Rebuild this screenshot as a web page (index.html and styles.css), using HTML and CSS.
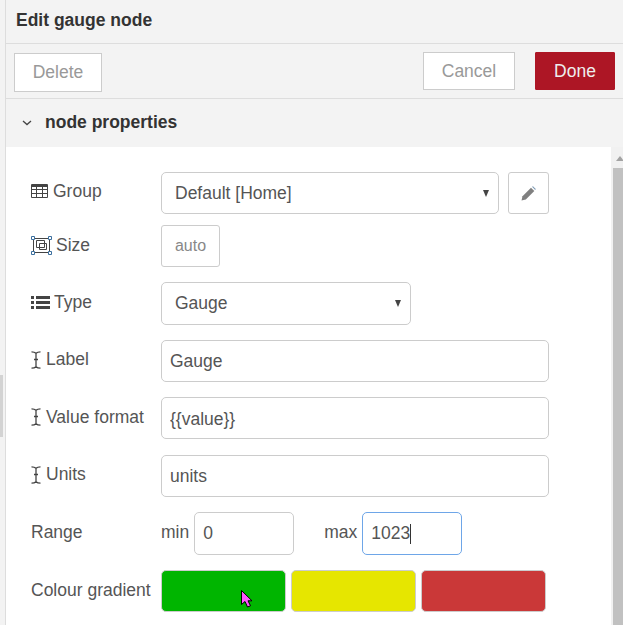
FILE: index.html
```html
<!DOCTYPE html>
<html lang="en">
<head>
  <meta charset="UTF-8" />
  <title>Edit gauge node</title>
  <link rel="stylesheet" href="styles.css">
</head>
<body>

  <div class="sash"></div>

  <main class="tray">
    <header class="tray-title">Edit gauge node</header>

    <div class="toolbar">
      <button class="btn btn-delete">Delete</button>
      <div class="toolbar-right">
        <button class="btn btn-cancel">Cancel</button>
        <button class="btn btn-done">Done</button>
      </div>
    </div>

    <div class="section-head">
      <svg class="chevron" viewBox="0 0 10 6" width="10" height="6"><path d="M1 1l4 3.600L9 1" fill="none" stroke="#444" stroke-width="1.300"/></svg>
      <span>node properties</span>
    </div>

    <div class="body">
      <form class="props" autocomplete="off">

        <div class="row row-group">
          <label class="lbl lbl-group">
            <svg class="ico" viewBox="0 0 17 14" width="17" height="14"><path d="M.5.5h16v13H.5zM.5 1.500h16M.5 2.500h16M.5 5.500h16M.5 9.500h16M5.500 3v10.500M11.500 3v10.500" fill="none" stroke="#444" stroke-width="1"/></svg>
            Group
          </label>
          <div class="select select-group"><span>Default [Home]</span><i class="caret"></i></div>
          <button type="button" class="edit-btn">
            <svg viewBox="0 0 15 15" width="15" height="15"><path d="M.5 14.500l1-4.300L10 1.700l3.300 3.300-8.500 8.500z" fill="#808080"/><path d="M11 .8l1-.6 2.800 2.800-.6 1z" fill="#7f9cb5"/></svg>
          </button>
        </div>

        <div class="row row-size">
          <label class="lbl lbl-size">
            <svg class="ico" viewBox="0 0 21 19" width="21" height="19"><path d="M2.500 2.500h16v14h-16z" fill="none" stroke="#444"/><path d="M5.500 4.500h8v7h-8zM8.500 7.500h7v6h-7z" fill="none" stroke="#444"/><path d="M.5.500h3v3h-3zM17.500.5h3v3h-3zM.5 15.500h3v3h-3zM17.500 15.500h3v3h-3z" fill="#fff" stroke="#3b6f9e"/></svg>
            Size
          </label>
          <button type="button" class="size-btn">auto</button>
        </div>

        <div class="row row-type">
          <label class="lbl lbl-type">
            <svg class="ico" viewBox="0 0 19 13" width="19" height="13"><path d="M0 0h3v3H0zM5 0h14v3H5zM0 5h3v3H0zM5 5h14v3H5zM0 10h3v3H0zM5 10h14v3H5z" fill="#444"/></svg>
            Type
          </label>
          <div class="select select-type"><span>Gauge</span><i class="caret"></i></div>
        </div>

        <div class="row row-text">
          <label class="lbl">
            <svg class="ico" viewBox="0 0 10 18" width="10" height="18"><path d="M.5 .8c2.200 0 3.500.5 4.500 1.500 1-1 2.300-1.500 4.500-1.500M5 2v14M3 8.500h4M.5 17.200c2.200 0 3.500-.5 4.500-1.500 1 1 2.300 1.500 4.500 1.500" fill="none" stroke="#444" stroke-width="1.300"/></svg>
            Label
          </label>
          <input class="field" type="text" value="Gauge" />
        </div>

        <div class="row row-text">
          <label class="lbl">
            <svg class="ico" viewBox="0 0 10 18" width="10" height="18"><path d="M.5 .8c2.200 0 3.500.5 4.500 1.500 1-1 2.300-1.500 4.500-1.500M5 2v14M3 8.500h4M.5 17.200c2.200 0 3.500-.5 4.500-1.500 1 1 2.300 1.500 4.500 1.500" fill="none" stroke="#444" stroke-width="1.300"/></svg>
            Value format
          </label>
          <input class="field" type="text" value="{{value}}" />
        </div>

        <div class="row row-text">
          <label class="lbl">
            <svg class="ico" viewBox="0 0 10 18" width="10" height="18"><path d="M.5 .8c2.200 0 3.500.5 4.500 1.500 1-1 2.300-1.500 4.500-1.500M5 2v14M3 8.500h4M.5 17.200c2.200 0 3.500-.5 4.500-1.500 1 1 2.300 1.500 4.500 1.500" fill="none" stroke="#444" stroke-width="1.300"/></svg>
            Units
          </label>
          <input class="field" type="text" value="units" />
        </div>

        <div class="row row-range">
          <label class="lbl">Range</label>
          <span class="unit">min</span>
          <input class="field field-num" type="text" value="0" />
          <span class="unit unit-max">max</span>
          <div class="field field-num field-focus">1023<i class="text-caret"></i></div>
        </div>

        <div class="row">
          <label class="lbl">Colour gradient</label>
          <div class="swatches">
            <div class="swatch swatch-green">
              <svg class="pointer" viewBox="0 0 12 18" width="12" height="18"><path d="M.5 .5v14l3.500-3 2.500 5.500 3-1.200-2.500-5H11z" fill="#ff55ff" stroke="#000" stroke-width="1"/></svg>
            </div>
            <div class="swatch swatch-yellow"></div>
            <div class="swatch swatch-red"></div>
          </div>
        </div>

      </form>

      <div class="scrollbar">
        <div class="scroll-up"></div>
        <div class="scroll-thumb"></div>
      </div>
    </div>
  </main>

</body>
</html>
```

FILE: styles.css
```css
/* Reset and base */
* {
  box-sizing: border-box;
}
html, body {
  height: 100%;
}
body {
  margin: 0;
  padding-left: 5px;
  background: #f3f3f3;
  color: #555;
  font-family: "Liberation Sans", Arial, sans-serif;
  font-size: 17.500px;
  overflow: hidden;
}
.sash {
  position: absolute;
  left: 0;
  top: 375px;
  width: 3px;
  height: 62px;
  background: #d3d3d3;
}
.tray {
  display: flex;
  flex-direction: column;
  height: 100%;
  border-left: 1px solid #ddd;
}

/* Header */
.tray-title {
  height: 44px;
  padding: 10px 0 0 10px;
  border-bottom: 1px solid #ddd;
  color: #333;
  font-weight: 700;
}
.toolbar {
  display: flex;
  justify-content: space-between;
  align-items: flex-start;
  height: 55px;
  padding: 8px 8px 0 8px;
  border-bottom: 1px solid #ddd;
}
.toolbar-right {
  display: flex;
  gap: 20px;
}
.btn {
  width: 88px;
  height: 38px;
  padding: 0;
  border: 1px solid #ccc;
  background: #fff;
  color: #999;
  font: inherit;
}
.btn-delete {
  height: 39px;
  margin-top: 1px;
}
.btn-cancel {
  width: 92px;
}
.btn-done {
  width: 80px;
  border-color: #ad1625;
  border-radius: 1px;
  background: #ad1625;
  color: #eee;
}
.section-head {
  display: flex;
  align-items: center;
  height: 48px;
  padding: 0 0 1px 16px;
  color: #333;
  font-weight: 700;
}
.chevron {
  margin-right: 13px;
}

/* Form */
.body {
  display: flex;
  flex: 1;
  min-height: 0;
  overflow: hidden;
  background: #fff;
}
.props {
  flex: none;
  width: 605px;
  padding: 25px 0 0 25px;
}
.row {
  display: flex;
  align-items: flex-start;
}
.row-group { height: 53px; }
.row-size { height: 57px; }
.row-type { height: 57.900px; }
.row-text { height: 57.500px; }
.row-range { height: 58px; }
.lbl {
  display: flex;
  align-items: center;
  gap: 5px;
  width: 130px;
  height: 40px;
  flex: none;
}
.lbl-group { height: 38px; }
.lbl-size { gap: 4px; }
.lbl-type { gap: 4px; }
.ico {
  flex: none;
}
.select {
  display: flex;
  align-items: center;
  justify-content: space-between;
  height: 42px;
  padding: 0 9px 0 13px;
  border: 1px solid #ccc;
  border-radius: 5px;
  background: #fff;
}
.select-group { width: 338px; }
.select-type { width: 250px; height: 43px; }
.caret {
  width: 0;
  height: 0;
  border-left: 3.500px solid transparent;
  border-right: 3.500px solid transparent;
  border-top: 7px solid #444;
}
.edit-btn {
  display: flex;
  align-items: center;
  justify-content: center;
  width: 41px;
  height: 42px;
  margin-left: 9px;
  padding: 0;
  border: 1px solid #ccc;
  border-radius: 3px;
  background: #fff;
}
.size-btn {
  width: 59px;
  height: 42px;
  padding: 0;
  border: 1px solid #ccc;
  border-radius: 3px;
  background: #fff;
  color: #888;
  font: inherit;
  font-size: 16px;
}
.field {
  width: 388px;
  height: 42px;
  padding: 2px 8px 0;
  border: 1px solid #ccc;
  border-radius: 5px;
  background: #fff;
  color: #555;
  font: inherit;
  outline: none;
}
.field-num {
  width: 100px;
  height: 43px;
  padding-top: 0;
}
.field-focus {
  display: flex;
  align-items: center;
  border-color: #6ea6e8;
}
.text-caret {
  width: 1px;
  height: 20px;
  background: #333;
}
.unit {
  margin: 10px 5px 0 0;
}
.unit-max {
  margin-left: 30px;
}
.swatches {
  display: flex;
  gap: 5px;
}
.swatch {
  position: relative;
  width: 125px;
  height: 42px;
  border: 1px solid #ccc;
  border-radius: 5px;
}
.swatch-green { background: #00b500; }
.swatch-yellow { background: #e6e600; }
.swatch-red { background: #ca3838; }
.pointer {
  position: absolute;
  left: 79px;
  top: 19px;
}

/* Scrollbar, cut off by the window edge */
.scrollbar {
  flex: none;
  width: 17px;
  background: #f1f1f1;
}
.scroll-up {
  width: 8px;
  height: 21px;
  margin-left: 5px;
  padding-top: 9px;
}
.scroll-up::before {
  content: "";
  display: block;
  width: 0;
  height: 0;
  border-left: 4px solid transparent;
  border-right: 4px solid transparent;
  border-bottom: 5px solid #a3a3a3;
}
.scroll-thumb {
  height: 460px;
  margin-left: 2px;
  background: #c1c1c1;
}
```
